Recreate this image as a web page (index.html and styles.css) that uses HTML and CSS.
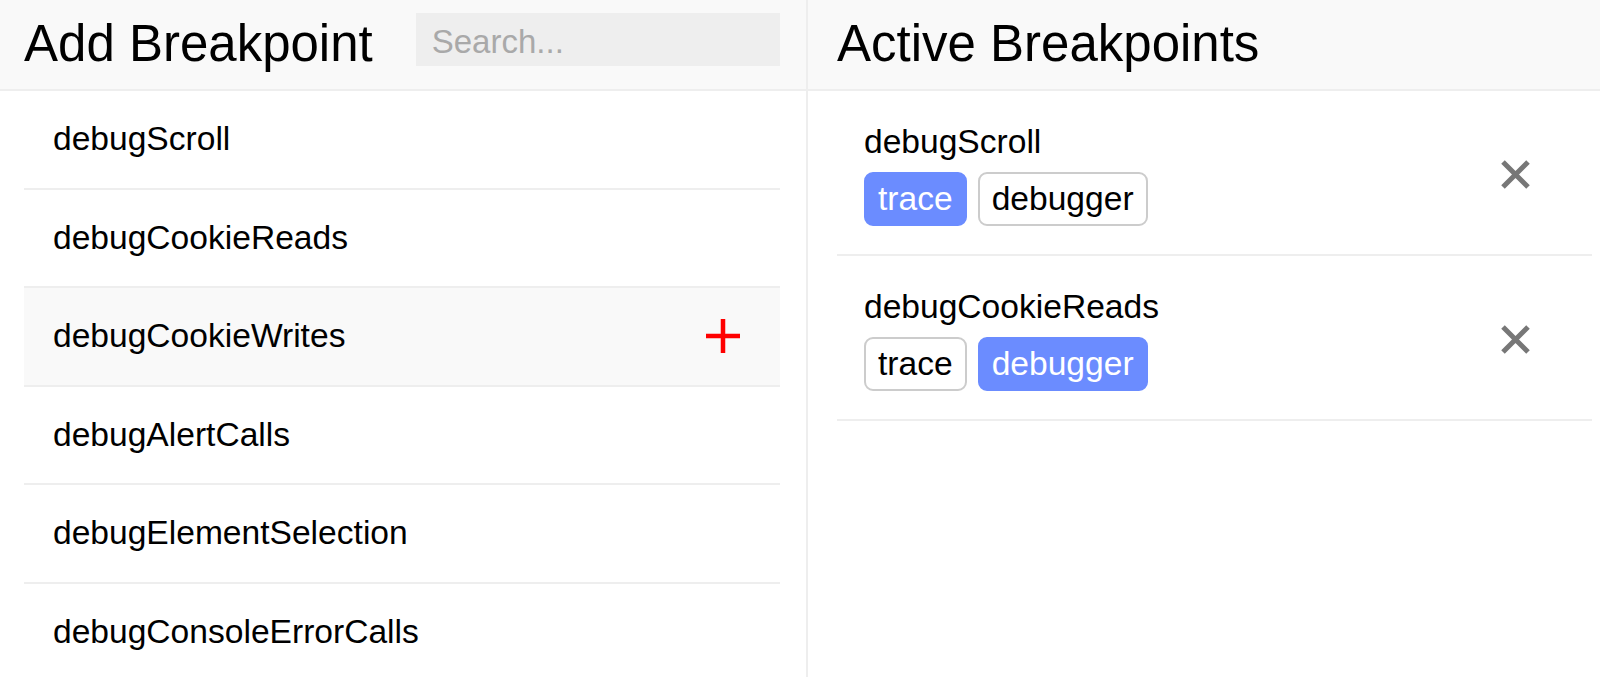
FILE: index.html
```html
<!DOCTYPE html>
<html>
<head>
<meta charset="utf-8">
<link rel="stylesheet" href="styles.css">
</head>
<body>
<div class="app">
  <section class="panel panel-add">
    <header class="panel-header">
      <h1 class="panel-title">Add Breakpoint</h1>
      <input class="search" type="text" placeholder="Search...">
    </header>
    <ul class="fn-list">
      <li class="fn-row">debugScroll</li>
      <li class="fn-row">debugCookieReads</li>
      <li class="fn-row is-hover">debugCookieWrites
        <svg class="plus" width="34" height="34" viewBox="0 0 34 34"><path d="M17 0V34M0 17H34" stroke="#ff0000" stroke-width="4.5" fill="none"/></svg>
      </li>
      <li class="fn-row">debugAlertCalls</li>
      <li class="fn-row">debugElementSelection</li>
      <li class="fn-row">debugConsoleErrorCalls</li>
    </ul>
  </section>
  <section class="panel panel-active">
    <header class="panel-header">
      <h1 class="panel-title">Active Breakpoints</h1>
    </header>
    <ul class="bp-list">
      <li class="bp-item">
        <div class="bp-info">
          <div class="bp-name">debugScroll</div>
          <div class="bp-tags">
            <span class="tag is-on">trace</span>
            <span class="tag">debugger</span>
          </div>
        </div>
        <svg class="remove" width="29" height="29" viewBox="0 0 29 29"><path d="M2 2L27 27M27 2L2 27" stroke="#777777" stroke-width="5" fill="none"/></svg>
      </li>
      <li class="bp-item">
        <div class="bp-info">
          <div class="bp-name">debugCookieReads</div>
          <div class="bp-tags">
            <span class="tag">trace</span>
            <span class="tag is-on">debugger</span>
          </div>
        </div>
        <svg class="remove" width="29" height="29" viewBox="0 0 29 29"><path d="M2 2L27 27M27 2L2 27" stroke="#777777" stroke-width="5" fill="none"/></svg>
      </li>
    </ul>
  </section>
</div>
</body>
</html>
```

FILE: styles.css
```css
html, body {
  margin: 0;
  padding: 0;
  background: #ffffff;
  font-family: "Liberation Sans", Arial, Helvetica, sans-serif;
  color: #000;
}

.app {
  display: flex;
  width: 1600px;
  height: 677px;
  overflow: hidden;
}

.panel {
  display: flex;
  flex-direction: column;
  min-height: 0;
}

.panel-add {
  width: 806px;
  border-right: 2px solid #eeeeee;
  flex: none;
}

.panel-active {
  flex: 1;
}

.panel-header {
  flex: none;
  box-sizing: border-box;
  height: 91px;
  border-bottom: 2px solid #eeeeee;
  background: #f9f9f9;
  display: flex;
  align-items: flex-start;
  padding-top: 13px;
}

.panel-add .panel-header {
  padding-left: 24px;
}

.panel-active .panel-header {
  padding-left: 29px;
}

.panel-title {
  margin: 0;
  font-size: 51px;
  font-weight: normal;
  line-height: 61px;
}

.search {
  margin-left: 43px;
  width: 364px;
  height: 53px;
  box-sizing: border-box;
  border: none;
  outline: none;
  background: #eeeeee;
  padding: 4px 16px 0 16px;
  font-family: "Liberation Sans", Arial, sans-serif;
  font-size: 33px;
  color: #333;
}

.search::placeholder {
  color: #a9a9a9;
}

.fn-list {
  flex: none;
  list-style: none;
  margin: 0 0 0 24px;
  padding: 0;
  width: 756px;
}

.fn-row {
  height: 96.5px;
  border-bottom: 2px solid #eeeeee;
  display: flex;
  align-items: center;
  justify-content: space-between;
  padding: 0 40px 0 29px;
  font-size: 33.6px;
}

.fn-row.is-hover {
  background: #f9f9f9;
}

.plus {
  display: block;
}

.bp-list {
  flex: none;
  list-style: none;
  margin: 0 0 0 29px;
  padding: 0;
  width: 755px;
}

.bp-item {
  display: flex;
  align-items: center;
  justify-content: space-between;
  padding: 31px 62px 28px 27px;
  border-bottom: 2px solid #eeeeee;
}

.bp-info {
  display: flex;
  flex-direction: column;
  gap: 11px;
}

.bp-name {
  font-size: 33.6px;
  line-height: 39px;
}

.bp-tags {
  display: flex;
  gap: 11px;
}

.tag {
  display: inline-flex;
  align-items: center;
  height: 54px;
  box-sizing: border-box;
  padding: 0 12px;
  border: 2px solid #cccccc;
  border-radius: 9px;
  font-size: 33.6px;
  background: #fff;
  color: #000;
}

.tag.is-on {
  background: #6b8cff;
  border-color: #6b8cff;
  color: #fff;
}

.remove {
  display: block;
}
```
